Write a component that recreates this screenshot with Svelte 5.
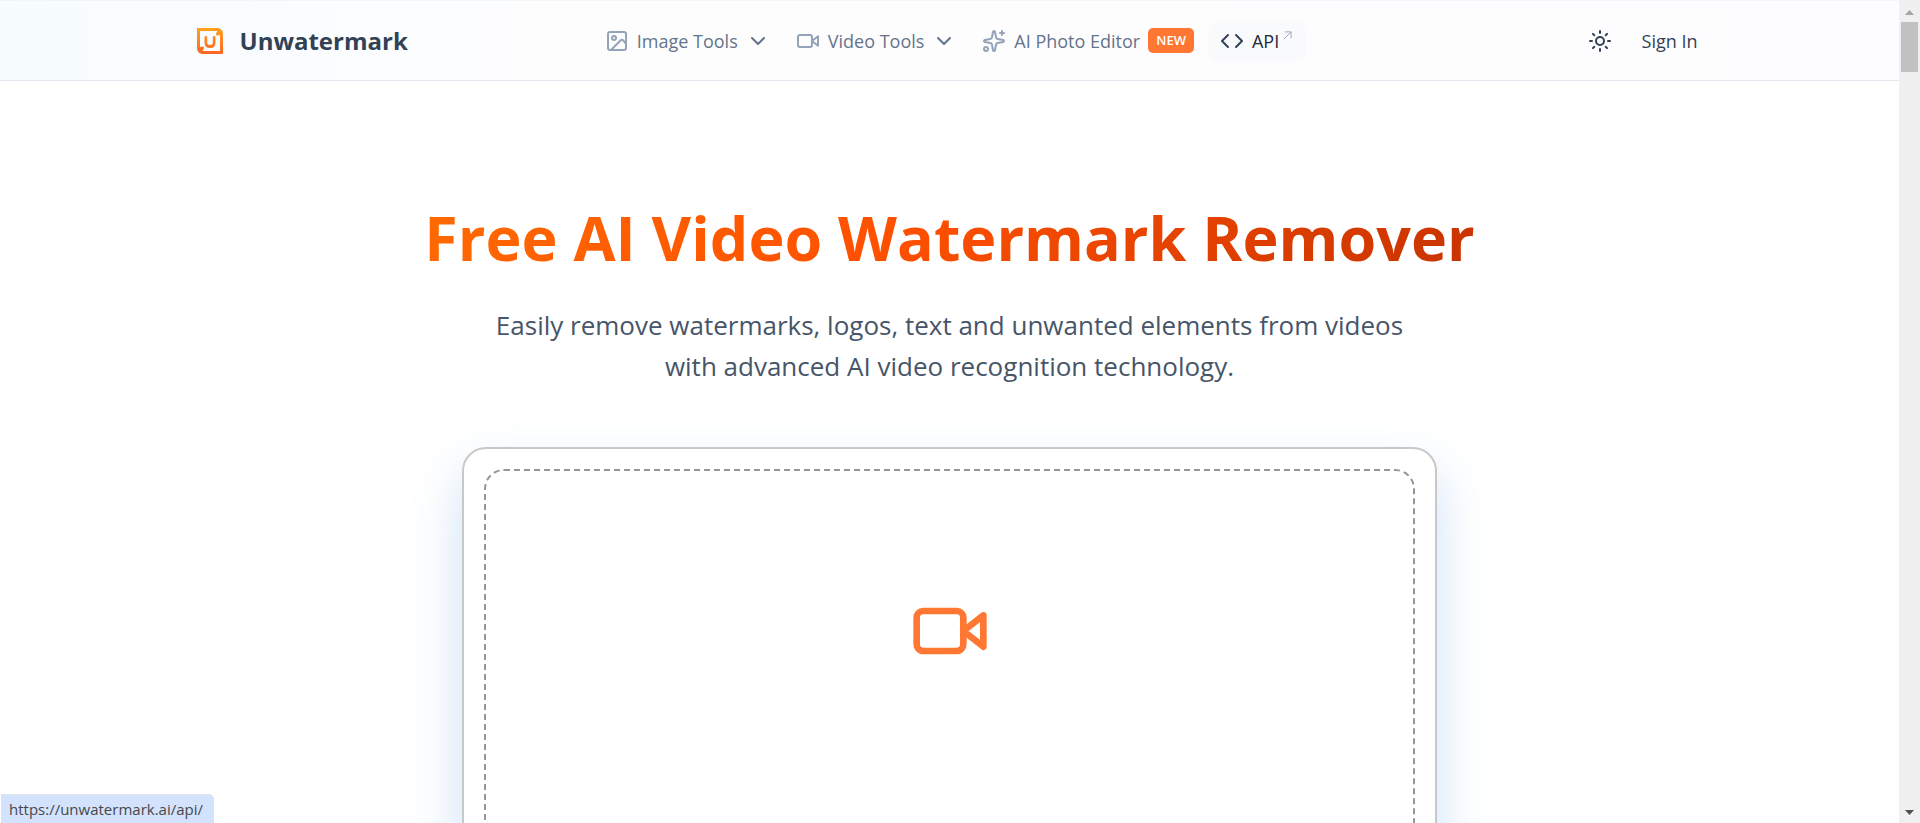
<script lang="ts">
  type NavItem = {
    label: string;
    icon: 'image' | 'video' | 'sparkles' | 'code';
    href?: string;
    menu?: boolean;
    badge?: string;
    external?: boolean;
    active?: boolean;
  };

  const navItems: NavItem[] = [
    { label: 'Image Tools', icon: 'image', menu: true },
    { label: 'Video Tools', icon: 'video', menu: true },
    { label: 'AI Photo Editor', icon: 'sparkles', href: '#editor', badge: 'NEW' },
    { label: 'API', icon: 'code', href: '#api', external: true, active: true },
  ];

  const statusUrl = 'https://unwatermark.ai/api/';
</script>

{#snippet icon(name: string)}
  <svg class="icon" viewBox="0 0 24 24" aria-hidden="true">
    {#if name === 'image'}
      <rect x="3" y="3" width="18" height="18" rx="2" />
      <circle cx="9" cy="9" r="2" />
      <path d="m6 21 9.5-9.5a2 2 0 0 1 2.8 0L21 15" />
    {:else if name === 'video'}
      <path d="M22 7.3 16 12l6 4.700Z" />
      <rect x="2" y="6" width="14" height="12" rx="2" />
    {:else if name === 'sparkles'}
      <path d="M11.02 2.81a1 1 0 0 1 1.96 0l1.05 5.56a2 2 0 0 0 1.6 1.6l5.56 1.05a1 1 0 0 1 0 1.96l-5.56 1.05a2 2 0 0 0-1.6 1.6l-1.05 5.56a1 1 0 0 1-1.96 0l-1.05-5.56a2 2 0 0 0-1.6-1.6l-5.56-1.05a1 1 0 0 1 0-1.96l5.56-1.05a2 2 0 0 0 1.6-1.6z" />
      <path d="M20 2v4M22 4h-4" />
      <circle cx="4" cy="20" r="2" />
    {:else if name === 'code'}
      <path d="m8 6-6 6 6 6M16 18l6-6-6-6" />
    {:else if name === 'chevron'}
      <path d="m6 9 6 6 6-6" />
    {:else if name === 'sun'}
      <circle cx="12" cy="12" r="4" />
      <path d="M12 2v2M12 20v2M4.9 4.9l1.4 1.4M17.7 17.7l1.4 1.4M2 12h2M20 12h2M6.3 17.7l-1.4 1.4M19.1 4.9l-1.4 1.4" />
    {/if}
  </svg>
{/snippet}

<div class="window">
  <div class="page">
    <header class="header">
      <div class="header-inner">
        <a class="brand" href="#home">
          <svg class="logo" viewBox="0 0 26 26" aria-hidden="true">
            <defs>
              <linearGradient id="logo-fill" x1="0" y1="0" x2="0" y2="1">
                <stop offset="0" stop-color="#ffa01f" />
                <stop offset="1" stop-color="#ff6526" />
              </linearGradient>
            </defs>
            <path
              fill="url(#logo-fill)"
              fill-rule="evenodd"
              d="M0 0H21Q26 1 26 6V26H5Q0 25 0 20ZM3 3V19L6 18.500Q7.500 19 7 20.500L5.500 23H23V7L20 7.500Q18.500 7 19 5.500L20.500 3ZM7.500 8.500Q9 7.500 10.200 8.500V14.500Q10.200 17 13 17T15.800 14.500V8.500Q17 7.500 18.500 8.500V14.500Q18.500 20 13 20T7.500 14.500Z"
            />
          </svg>
          <span>Unwatermark</span>
        </a>

        <nav class="nav" aria-label="Main">
          {#each navItems as item}
            {#if item.menu}
              <button class="nav-item" type="button" aria-haspopup="true">
                {@render icon(item.icon)}
                <span>{item.label}</span>
                <span class="chevron">{@render icon('chevron')}</span>
              </button>
            {:else}
              <a class="nav-item" class:active={item.active} href={item.href}>
                {@render icon(item.icon)}
                <span>{item.label}</span>
                {#if item.badge}
                  <span class="badge">{item.badge}</span>
                {/if}
                {#if item.external}
                  <svg class="external" viewBox="0 0 10 10" aria-hidden="true">
                    <path d="M1 9 9 1M2 1h7v7" />
                  </svg>
                {/if}
              </a>
            {/if}
          {/each}
        </nav>

        <div class="account">
          <button class="theme" type="button" aria-label="Toggle theme">
            {@render icon('sun')}
          </button>
          <a class="sign-in" href="#signin">Sign In</a>
        </div>
      </div>
    </header>

    <main class="hero">
      <h1>Free AI Video Watermark Remover</h1>
      <p>
        Easily remove watermarks, logos, text and unwanted elements from videos
        with advanced AI video recognition technology.
      </p>
      <section class="card">
        <button class="dropzone" type="button" aria-label="Upload video">
          {@render icon('video')}
        </button>
      </section>
    </main>
  </div>

  <div class="scrollbar" aria-hidden="true">
    <svg class="arrow" viewBox="0 0 9 5"><path fill="#a3a3a3" d="M0 5 4.500 0 9 5Z" /></svg>
    <div class="thumb"></div>
    <svg class="arrow" viewBox="0 0 9 5"><path fill="#505050" d="M0 0 4.500 5 9 0Z" /></svg>
  </div>

  <div class="status">{statusUrl}</div>
</div>

<style>
  :global(body) {
    background: #fff;
    font-family: 'Segoe UI', 'Open Sans', 'Noto Sans', sans-serif;
  }

  .window {
    position: relative;
    display: flex;
    height: 100vh;
    overflow: hidden;
  }

  .page {
    flex: 1;
    min-width: 0;
  }

  a {
    color: inherit;
    text-decoration: none;
  }

  button {
    border: 0;
    padding: 0;
    background: none;
    color: inherit;
    font: inherit;
    cursor: pointer;
  }

  .icon {
    display: block;
    flex: none;
    width: 24px;
    height: 24px;
    fill: none;
    stroke: currentColor;
    stroke-width: 2;
    stroke-linecap: round;
    stroke-linejoin: round;
  }

  .header {
    border-top: 1px solid #f3f6f9;
    border-bottom: 1px solid #e2e8f0;
    background: linear-gradient(90deg, #f7fcff, #fdfdfe 30%, #fdfdff);
  }

  .header-inner {
    display: grid;
    grid-template-columns: 1fr auto 1fr;
    align-items: center;
    max-width: 1506px;
    height: 79px;
    margin: 0 auto;
    padding: 0 16px;
  }

  .brand {
    display: flex;
    align-items: center;
    gap: 17px;
    color: #334155;
    font-size: 24px;
    font-weight: 700;
  }

  .logo {
    width: 26px;
    height: 26px;
  }

  .nav {
    display: flex;
    gap: 2px;
    color: #64748b;
    font-size: 18px;
  }

  .nav-item {
    display: flex;
    align-items: center;
    gap: 8px;
    height: 40px;
    padding: 0 12px;
    border-radius: 10px;
    white-space: nowrap;
  }

  .nav-item > .icon {
    color: #94a3b8;
  }

  .nav-item.active {
    background: #f8fafc;
    color: #1e293b;
  }

  .nav-item.active > .icon {
    color: #334155;
  }

  .badge {
    padding: 0 8px;
    border-radius: 5px;
    background: #ff7733;
    color: #fff;
    font-size: 13px;
    font-weight: 600;
    line-height: 25px;
  }

  .external {
    align-self: flex-start;
    width: 9px;
    height: 9px;
    margin: 10px 2px 0 -4px;
    fill: none;
    stroke: #94a3b8;
    stroke-width: 1;
  }

  .account {
    display: flex;
    align-items: center;
    justify-content: flex-end;
    gap: 30px;
    padding-right: 5px;
    color: #334155;
    font-size: 18px;
  }

  .hero {
    display: flex;
    flex-direction: column;
    align-items: center;
    padding: 112px 16px 0;
    text-align: center;
  }

  h1 {
    margin: 0;
    background: linear-gradient(135deg, #ff6b00, #ff5000 45%, #c63200);
    background-clip: text;
    color: transparent;
    font-size: 61px;
    font-weight: 700;
    line-height: 90px;
  }

  p {
    max-width: 920px;
    margin: 22px 0 60px;
    color: #475569;
    font-size: 26px;
    line-height: 41px;
  }

  .card {
    box-sizing: border-box;
    width: 100%;
    max-width: 975px;
    padding: 20px;
    border: 2px solid #c8c8c8;
    border-radius: 24px;
    background: #fff;
    box-shadow: 0 25px 50px rgba(74, 144, 226, 0.28);
  }

  .dropzone {
    display: flex;
    justify-content: center;
    width: 100%;
    min-height: 460px;
    padding-top: 120px;
    border: 2px dashed #969696;
    border-radius: 20px;
    color: #ff7733;
  }

  .dropzone > .icon {
    width: 80px;
    height: 80px;
  }

  .scrollbar {
    display: flex;
    flex: none;
    flex-direction: column;
    align-items: center;
    width: 21px;
    box-sizing: border-box;
    padding: 10px 0 8px;
    background: #f0f0f0;
  }

  .arrow {
    width: 9px;
    height: 5px;
  }

  .thumb {
    width: 17px;
    height: 50px;
    margin: 7px 0 auto;
    background: #c1c1c1;
  }

  .status {
    position: absolute;
    bottom: 0;
    left: 1px;
    padding: 0 10px 0 8px;
    border-top: 1px solid #e0e4ea;
    border-right: 1px solid #e0e4ea;
    border-top-right-radius: 5px;
    background: #d3e3fd;
    color: #474747;
    font-size: 15px;
    line-height: 28px;
  }
</style>
